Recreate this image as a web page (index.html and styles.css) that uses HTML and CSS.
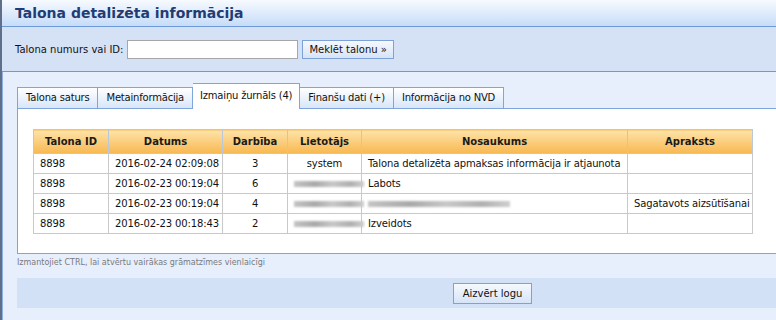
FILE: index.html
```html
<html>
<head>
    <link rel="stylesheet" href="styles.css">
</head>
<body>
    <div class="page">
        <div class="title-bar">
            <h1>Talona detalizēta informācija</h1>
        </div>

        <div class="search-bar">
            <label for="ticket-id">Talona numurs vai ID:</label>
            <input id="ticket-id" type="text"/>
            <button class="btn">Meklēt talonu »</button>
        </div>

        <div class="content">
            <div class="tabs">
                <div class="tab">Talona saturs</div>
                <div class="tab">Metainformācija</div>
                <div class="tab active">Izmaiņu žurnāls (4)</div>
                <div class="tab">Finanšu dati (+)</div>
                <div class="tab">Informācija no NVD</div>
            </div>

            <div class="panel">
                <table class="log">
                    <thead>
                        <tr>
                            <th class="col-id">Talona ID</th>
                            <th class="col-date">Datums</th>
                            <th class="col-action">Darbība</th>
                            <th class="col-user">Lietotājs</th>
                            <th class="col-name">Nosaukums</th>
                            <th class="col-desc">Apraksts</th>
                        </tr>
                    </thead>
                    <tbody>
                        <tr>
                            <td>8898</td>
                            <td>2016-02-24 02:09:08</td>
                            <td class="center">3</td>
                            <td class="center">system</td>
                            <td>Talona detalizēta apmaksas informācija ir atjaunota</td>
                            <td></td>
                        </tr>
                        <tr>
                            <td>8898</td>
                            <td>2016-02-23 00:19:04</td>
                            <td class="center">6</td>
                            <td class="center"><span class="blur"></span></td>
                            <td>Labots</td>
                            <td></td>
                        </tr>
                        <tr>
                            <td>8898</td>
                            <td>2016-02-23 00:19:04</td>
                            <td class="center">4</td>
                            <td class="center"><span class="blur"></span></td>
                            <td><span class="blur wide"></span></td>
                            <td>Sagatavots aizsūtīšanai</td>
                        </tr>
                        <tr>
                            <td>8898</td>
                            <td>2016-02-23 00:18:43</td>
                            <td class="center">2</td>
                            <td class="center"><span class="blur"></span></td>
                            <td>Izveidots</td>
                            <td></td>
                        </tr>
                    </tbody>
                </table>
            </div>

            <p class="hint">Izmantojiet CTRL, lai atvērtu vairākas grāmatzīmes vienlaicīgi</p>
        </div>

        <div class="footer">
            <button class="btn">Aizvērt logu</button>
        </div>
    </div>
</body>
</html>
```

FILE: styles.css
```css
body {
    margin: 0;
    width: 776px;
    height: 320px;
    overflow: hidden;
    background: #e7eefc;
    font-family: "DejaVu Sans", sans-serif;
    font-size: 10px;
    color: #111;
}

.page {
    width: 981px;
    min-height: 320px;
    border-left: 2px solid #5f6f8a;
    box-shadow: inset 1px 0 0 #8fb0de;
    background: #e7eefc;
}

.title-bar {
    height: 26px;
    border-bottom: 1px solid #6c9ad6;
    background: linear-gradient(#f7faff, #c6dcf8);
    display: flex;
    align-items: center;
    padding-left: 13px;
}

.title-bar h1 {
    margin: 0;
    font-size: 14px;
    font-weight: bold;
    color: #1f3d74;
}

.search-bar {
    height: 44px;
    border-bottom: 1px solid #6c9ad6;
    background: #d5e1f4;
    display: flex;
    align-items: center;
    padding-left: 13px;
    gap: 4px;
}

.search-bar input {
    width: 171px;
    height: 19px;
    box-sizing: border-box;
    margin: 0;
    border: 1px solid #a7a7a7;
    background: #fff;
}

.btn {
    font-family: "DejaVu Sans", sans-serif;
    font-size: 10px;
    color: #111;
    height: 19px;
    padding: 0 6px;
    margin: 0;
    border: 1px solid #7da2d8;
    border-radius: 0;
    background: linear-gradient(#f6f9fe, #d6e4f8);
    cursor: pointer;
}

.content {
    padding: 11px 15px 0 15px;
}

.tabs {
    display: flex;
    align-items: flex-end;
}

.tab {
    height: 20px;
    line-height: 20px;
    padding: 0 8px;
    letter-spacing: -0.2px;
    border: 1px solid #7ea5dc;
    border-bottom: none;
    border-left-width: 0;
    background: linear-gradient(#ffffff, #d8e6f9);
    white-space: nowrap;
}

.tab:first-child {
    border-left-width: 1px;
}

.tab.active {
    height: 25px;
    line-height: 24px;
    padding: 0 7px;
    background: #fff;
    margin-bottom: -1px;
    position: relative;
    z-index: 1;
}

.panel {
    border: 1px solid #7ea5dc;
    background: #fff;
    padding: 20px 15px 19px 15px;
}

.log {
    border-collapse: collapse;
    table-layout: fixed;
    width: 719px;
    font: inherit;
    color: inherit;
}

.log th {
    box-sizing: border-box;
    height: 24px;
    padding: 0 6px;
    font-weight: bold;
    white-space: nowrap;
    background: linear-gradient(#fde3a9, #f8b850);
    border: 1px solid #b9c8dc;
    border-top-color: #f1c27a;
    border-bottom: 1px solid #c7c7c7;
    color: #1a1a1a;
}

.log td {
    height: 20px;
    padding: 0 6px;
    letter-spacing: -0.12px;
    border: 1px solid #c9c9c9;
    white-space: nowrap;
    overflow: visible;
}

.col-id { width: 75px; }
.col-date { width: 114px; }
.col-action { width: 65px; }
.col-user { width: 74px; }
.col-name { width: 266px; }
.col-desc { width: 125px; }

.log td.center {
    text-align: center;
}

.blur {
    display: inline-block;
    vertical-align: middle;
    width: 70px;
    height: 6px;
    background: linear-gradient(90deg, #c4c4c4, #a9a9a9 30%, #c8c8c8 55%, #b0b0b0 80%, #cfcfcf);
    filter: blur(1.3px);
}

.blur.wide {
    width: 142px;
}

.hint {
    margin: 4px 0 0 0;
    font-size: 8px;
    color: #7a7a7a;
}

.footer {
    margin: 11px 15px 0 15px;
    height: 30px;
    background: #d3e1f7;
    display: flex;
    align-items: center;
    justify-content: center;
}

.footer .btn {
    height: 21px;
    width: 79px;
}
```
